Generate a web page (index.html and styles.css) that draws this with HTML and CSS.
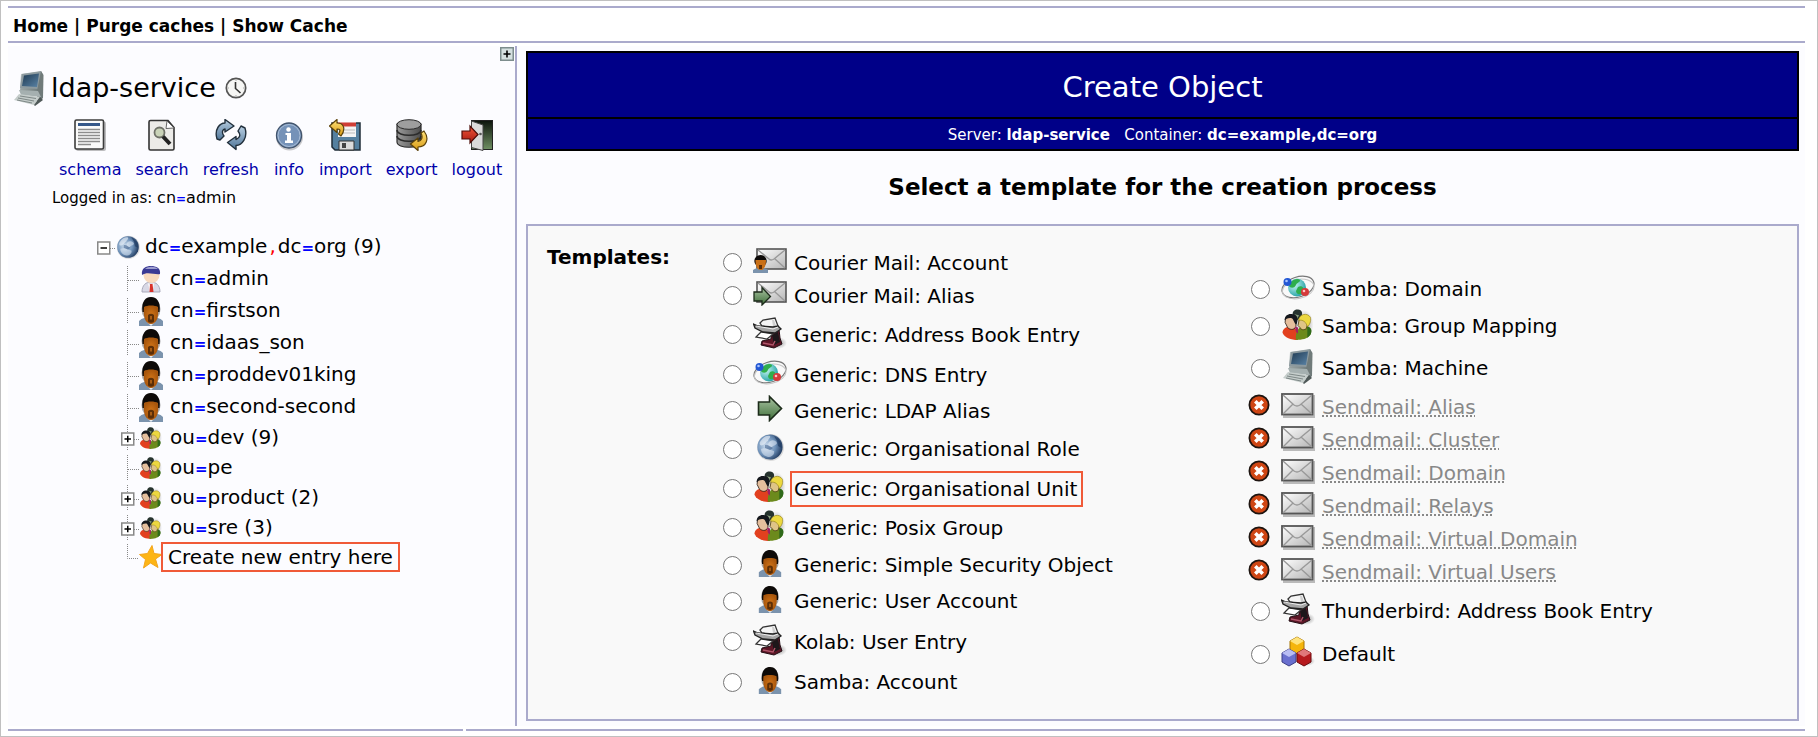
FILE: index.html
```html
<!DOCTYPE html>
<html lang="en">
<head>
    <meta charset="utf-8">
    <title>ldap-service - Create Object</title>
    <link rel="stylesheet" href="styles.css">
</head>
<body>
    <!-- icon sprite -->
    <svg class="sprite" aria-hidden="true">
        <defs>
            <linearGradient id="gScreen" x1="0" y1="0" x2="1" y2="1"><stop offset="0" stop-color="#1f3a52"/><stop offset="1" stop-color="#5a83a6"/></linearGradient>
            <linearGradient id="gCase" x1="0" y1="0" x2="1" y2="1"><stop offset="0" stop-color="#c3cbcb"/><stop offset="1" stop-color="#5f6b6b"/></linearGradient>
            <linearGradient id="gMail" x1="0" y1="0" x2="1" y2="1"><stop offset="0" stop-color="#ffffff"/><stop offset="1" stop-color="#b5b5b5"/></linearGradient>
            <linearGradient id="gGreen" x1="0" y1="0" x2="0" y2="1"><stop offset="0" stop-color="#a9c3a2"/><stop offset="1" stop-color="#3f6f3a"/></linearGradient>
            <linearGradient id="gGold" x1="0" y1="0" x2="0" y2="1"><stop offset="0" stop-color="#ffe27a"/><stop offset="1" stop-color="#d99a12"/></linearGradient>
            <linearGradient id="gBlue" x1="0" y1="0" x2="0" y2="1"><stop offset="0" stop-color="#b9cfe2"/><stop offset="1" stop-color="#4f7598"/></linearGradient>
            <linearGradient id="gDisk" x1="0" y1="0" x2="1" y2="0"><stop offset="0" stop-color="#9a9a9a"/><stop offset="1" stop-color="#4c4c4c"/></linearGradient>
            <linearGradient id="gDoor" x1="0" y1="0" x2="0" y2="1"><stop offset="0" stop-color="#0c140c"/><stop offset="1" stop-color="#6f8f62"/></linearGradient>
            <linearGradient id="gRed" x1="0" y1="0" x2="0" y2="1"><stop offset="0" stop-color="#f0553a"/><stop offset="1" stop-color="#a81a10"/></linearGradient>
            <radialGradient id="gGlobe" cx="35%" cy="45%" r="68%"><stop offset="0" stop-color="#cfdff0"/><stop offset="0.55" stop-color="#6d90b8"/><stop offset="1" stop-color="#1a3358"/></radialGradient>
            <radialGradient id="gWorld" cx="35%" cy="35%" r="70%"><stop offset="0" stop-color="#c8f6f2"/><stop offset="1" stop-color="#22a1a5"/></radialGradient>
            <radialGradient id="gFace"><stop offset="0" stop-color="#d07418"/><stop offset="1" stop-color="#a8560c"/></radialGradient>
            <radialGradient id="gShade"><stop offset="0" stop-color="#000" stop-opacity="0.4"/><stop offset="1" stop-color="#000" stop-opacity="0"/></radialGradient>
        </defs>
        <symbol id="machine" viewBox="0 0 32 36">
            <path d="M8 4 28 1 30 5 28 24 7 21Z" fill="url(#gCase)"/>
            <path d="M9 4 28 1.500 26 19 7 18Z" fill="#8d9a9f"/>
            <path d="M11 5.500 26 3.500 24 17 9 16Z" fill="url(#gScreen)"/>
            <path d="M28 1 30.500 5 30 28 24 34 24 21Z" fill="#707b7a"/>
            <path d="M6 20 25 21 28 27 8 25Z" fill="#a5b0b0"/>
            <path d="M6 24 27 27 21 35 1 30Z" fill="#c5cdcb"/>
            <path d="M7 26 23 28.500M5 28 21 31M4 30 19 33" stroke="#7f8988" fill="none"/>
            <path d="M27 27 21 35 22 36 30 30Z" fill="#4f5958"/>
        </symbol>
        <symbol id="clock" viewBox="0 0 22 22">
            <circle cx="11" cy="11" r="9.700" fill="#f6f6f4" stroke="#555" stroke-width="1.700"/>
            <path d="M10.500 5V11.500L15.500 16" fill="none" stroke="#333" stroke-width="1.600"/>
            <path d="M11 2.500V4M11 18V19.500M2.500 11H4M18 11H19.500" stroke="#aaa"/>
        </symbol>
        <symbol id="schema" viewBox="0 0 32 32">
            <rect x="2" y="2.500" width="30" height="29.500" rx="2" fill="#000" opacity="0.25"/>
            <rect x="1" y="1" width="28.500" height="29" rx="1.500" fill="#fafafa" stroke="#3c3c3c" stroke-width="1.600"/>
            <rect x="4" y="4" width="22" height="3" fill="#35588a"/>
            <path d="M4 10.500H26M4 13.500H26M4 16.500H26M4 19.500H26M4 22.500H26M4 25.500H17" stroke="#8c8c8c" stroke-width="1.300"/>
        </symbol>
        <symbol id="search" viewBox="0 0 32 32">
            <path d="M4.500 1.500H22L28 8.500V29.500Q28 31 26.500 31H4.500Q3 31 3 29.500V3Q3 1.500 4.500 1.500Z" fill="#ecebe8" stroke="#333" stroke-width="1.600"/>
            <path d="M21 2 20 9.500 28 9Z" fill="#fff" stroke="#666"/>
            <circle cx="13.500" cy="13.500" r="5" fill="#c9d3b8" stroke="#6f7168" stroke-width="1.800"/>
            <path d="M17 17.500 24 25" stroke="#222" stroke-width="4"/>
        </symbol>
        <symbol id="refresh" viewBox="0 0 32 32">
            <path d="M2 20C-1 10 5 4 10 4V0.500L19 7 10 13V10C8 10 6 13 9 17L5 21Z" fill="url(#gBlue)" stroke="#22303c" stroke-width="1.400" stroke-linejoin="round"/>
            <path d="M30 9C33 19 27 26 21 26.500V30.500L12.500 23.500 21 17.500V20.500C25 19 26 16 23 12L26 7Z" fill="url(#gBlue)" stroke="#22303c" stroke-width="1.400" stroke-linejoin="round"/>
        </symbol>
        <symbol id="info" viewBox="0 0 32 32">
            <circle cx="16.500" cy="18" r="13.500" fill="#000" opacity="0.2"/>
            <circle cx="16" cy="16.500" r="12.500" fill="#7592b8" stroke="#41536b" stroke-width="1.300"/>
            <circle cx="16" cy="16.500" r="11" fill="none" stroke="#a9bdd6"/>
            <circle cx="15.500" cy="10.500" r="2.200" fill="#fff"/>
            <path d="M12.500 14H18V21.500H20V24H12V21.500H14V16H12.500Z" fill="#fff"/>
        </symbol>
        <symbol id="import" viewBox="0 0 32 32">
            <path d="M3 4H31V31H6L3 28Z" fill="#55809f" stroke="#1f2c38" stroke-width="1.500"/>
            <rect x="9" y="3" width="18" height="15" fill="#f4f4f4"/>
            <rect x="9" y="3.500" width="18" height="4" fill="#cf3d36"/>
            <path d="M10 11H26M10 14H26" stroke="#bbb"/>
            <path d="M10 22H25V31H10Z" fill="#dcdcdc" stroke="#333"/>
            <rect x="13" y="24" width="4" height="5" fill="#444"/>
            <path d="M0.500 7 8 0.500V4C15 4 17 10 12 17L9.500 15C12 11 11 10 8 10V13.500Z" fill="url(#gGold)" stroke="#5b420a" stroke-width="1.200" stroke-linejoin="round"/>
        </symbol>
        <symbol id="export" viewBox="0 0 32 32">
            <path d="M1 5V23C1 30 25 30 25 23V5Z" fill="url(#gDisk)" stroke="#2b2b2b" stroke-width="1.200"/>
            <path d="M1 11C1 18 25 18 25 11M1 17C1 24 25 24 25 17" fill="none" stroke="#2b2b2b" stroke-width="1.500"/>
            <ellipse cx="13" cy="5.500" rx="12" ry="4.800" fill="#9e9e9e" stroke="#2b2b2b"/>
            <path d="M28 12C34 20 30 28 22 28V31.500L14.500 25 22 19V22.500C26 22 27 18 25 14Z" fill="url(#gGold)" stroke="#5b420a" stroke-width="1.200" stroke-linejoin="round"/>
        </symbol>
        <symbol id="logout" viewBox="0 0 32 32">
            <rect x="10.500" y="1.500" width="21" height="29" fill="url(#gDoor)" stroke="#222"/>
            <path d="M10.500 2 22 6V31.500L10.500 28.500Z" fill="#dadada" stroke="#444"/>
            <circle cx="19.500" cy="15" r="1.300" fill="#555"/>
            <path d="M1 12H9V7L17 15.500 9 24V20H1Z" fill="url(#gRed)" stroke="#4c0c08" stroke-width="1.200"/>
        </symbol>
        <symbol id="globe" viewBox="0 0 28 28">
            <circle cx="14.500" cy="14.500" r="13.500" fill="#000" opacity="0.12"/>
            <circle cx="14" cy="14" r="12.600" fill="url(#gGlobe)"/>
            <path d="M4 9C7 4 11 2 14 3 15 5 12 6 12 8 10 8 10 11 7 12 5 13 3 12 4 9Z" fill="#f0f5fb" opacity="0.6"/>
            <path d="M13 9C16 6 20 7 21 10 20 13 17 12 16 14 13 15 11 12 13 9ZM5 16C9 14 14 17 18 18 19 21 16 24 12 24 8 23 5 20 5 16Z" fill="#eef4fb" opacity="0.5"/>
            <path d="M18 3C23 5 26 10 25.500 15L22 13 21 8Z" fill="#17345c" opacity="0.6"/>
            <path d="M9 12C12 11 14 14 17 15L14 17 9 15Z" fill="#2b4d7d" opacity="0.5"/>
        </symbol>
        <symbol id="admin" viewBox="0 0 24 28">
            <path d="M3 27C3 20 7 17 12 17S21 20 21 27Z" fill="#d9d9e6" stroke="#a9a9bb"/>
            <path d="M9 18 12 21 15 18 13.500 27H11Z" fill="#fff"/>
            <path d="M11 19H13.500L14.500 27H10.500Z" fill="#d8322a"/>
            <circle cx="12.500" cy="10" r="8" fill="#f8d9bd"/>
            <path d="M3 10C2 3 7 1 12 1S22 3 21 9C16 10 8 6 3 10Z" fill="#3a3a94"/>
            <path d="M6 4C9 1 16 1 19 4Z" fill="#9d9dcf"/>
        </symbol>
        <symbol id="user" viewBox="0 0 24 29">
            <path d="M0 24C3 21 7 20 12 20S21 21 24 24V29H0Z" fill="#7b93ad"/>
            <path d="M8 25H16L12 29Z" fill="#e9eef3"/>
            <ellipse cx="12" cy="12" rx="9.500" ry="12" fill="#333" opacity="0.4"/>
            <path d="M3.500 15C2 4 7 0 12 0S22 4 20.500 15Z" fill="#0d0a08"/>
            <path d="M5 10C8 8 16 8 19 10 20 19 18 27 12 27S4 19 5 10Z" fill="url(#gFace)"/>
            <path d="M9 24.500V18Q12 15.500 15 18V24.500Q12 27 9 24.500Z" fill="#4a2506" opacity="0.85"/>
            <rect x="11" y="19" width="2" height="3.500" fill="#a85c14"/>
        </symbol>
        <symbol id="group" viewBox="0 0 30 30">
            <ellipse cx="21" cy="15" rx="9" ry="14" fill="url(#gShade)"/>
            <path d="M10 7C9 2 12 0 15 0.500 19 1 20 4 18 8L14 11Z" fill="#26332e"/>
            <path d="M11.500 5 16 6 14 10Z" fill="#8aa07f"/>
            <path d="M0 23C0 19 4 17 8 17S15 20 15 30C8 30 2 28 0 23Z" fill="#e2401f"/>
            <path d="M13 30C12 22 16 16 22 16 27 17 29 20 27 25 24 29 19 30 13 30Z" fill="#6c8a1c"/>
            <path d="M24 17C28 18 29 21 27 25L24 28Z" fill="#2f6a1a"/>
            <path d="M3 9C4 5 12 5 13 9L13 17C11 21 7 20 5 18L2.500 13Z" fill="#e5bf9d" stroke="#2a1c12" stroke-width="0.800"/>
            <path d="M2 11C2 6 6 4 10 5 14 5 16 9 13.500 15 11 14 11 10 9 9 6 8 3 10 2 11Z" fill="#15181d"/>
            <path d="M16 11C17 7 24 8 25 12L23 19C20 21 18 20 17 18L15 16Z" fill="#dfc487" stroke="#4b3a12" stroke-width="0.800"/>
            <path d="M15.500 11C16 5 24 3 27 8 28 12 26 16 24 17 23 13 20 10 15.500 11Z" fill="#ecd840" stroke="#8c7a1a" stroke-width="0.600"/>
            <path d="M12 17 15 18 15 24 13 22Z" fill="#a12063"/>
        </symbol>
        <symbol id="star" viewBox="0 0 24 24">
            <path d="M13 0.500 15 8.500 23 9.500 16.500 14 19 22.500 11.500 18 4.500 23 6.500 14.500 0.500 9.500 8.500 8.500Z" fill="#fdb515" stroke="#f3a51d"/>
        </symbol>
        <symbol id="mail" viewBox="0 0 34 25">
            <rect x="2" y="2" width="32" height="23" fill="#000" opacity="0.25"/>
            <rect x="1" y="1" width="30.500" height="20.500" fill="url(#gMail)" stroke="#555" stroke-width="1.800"/>
            <path d="M2 2 13 12Q16 14 19 12L31 2M2 21 12 11M31 21 20 11" fill="none" stroke="#999" stroke-width="1.400"/>
        </symbol>
        <symbol id="mail-user" viewBox="0 0 34 25">
            <rect x="4" y="1" width="29" height="20" fill="url(#gMail)" stroke="#555" stroke-width="1.600"/>
            <path d="M5 2 16 11Q18 13 21 11L32 2M32 20 22 11" fill="none" stroke="#999" stroke-width="1.400"/>
            <path d="M0 25V22C4 19 11 19 15 22V25Z" fill="#7b93ad"/>
            <ellipse cx="7.500" cy="13" rx="6.200" ry="6" fill="#0d0a08"/>
            <path d="M2.500 12H13C13 18 11 22 7.500 22S2.500 18 2.500 12Z" fill="#c97018"/>
            <rect x="6" y="17" width="3" height="4" fill="#5a2e08"/>
        </symbol>
        <symbol id="mail-alias" viewBox="0 0 34 25">
            <rect x="4" y="1" width="29" height="20" fill="url(#gMail)" stroke="#555" stroke-width="1.600"/>
            <path d="M5 2 16 11Q18 13 21 11L32 2M32 20 22 11" fill="none" stroke="#999" stroke-width="1.400"/>
            <path d="M1 11H9V6.500L17.500 15.500 9 24V20H1Z" fill="url(#gGreen)" stroke="#1c2b1a" stroke-width="1.300"/>
        </symbol>
        <symbol id="book" viewBox="0 0 34 32">
            <ellipse cx="25" cy="26" rx="9" ry="6" fill="url(#gShade)"/>
            <path d="M18 15 26 12 27 21 29 27 21 31 8 28 9 24 18 22Z" fill="#5c1626" stroke="#241016"/>
            <path d="M19 18 25 15 27 25 21 28Z" fill="#1d171a"/>
            <path d="M10 26 20 28 22 24" fill="none" stroke="#b0566a" stroke-width="1.400"/>
            <path d="M7 6 10 3 22 1 25 9 22 12 9 9Z" fill="#f5f5f5" stroke="#333" stroke-width="1.300"/>
            <path d="M19 3 21 3 23 9 20 9Z" fill="#cfcfcf"/>
            <path d="M3 20 8 15 20 17 14 22Z" fill="#fff" stroke="#333" stroke-width="1.200"/>
            <path d="M0.500 7 5 9 20 10 25 9 28 12 22 16 10 15 2 11Z" fill="#a5a5a5" stroke="#222" stroke-width="1.300"/>
            <path d="M3 9 20 12 25 10" fill="none" stroke="#eee"/>
        </symbol>
        <symbol id="dns" viewBox="0 0 34 27">
            <ellipse cx="17" cy="13" rx="16.500" ry="10" fill="none" stroke="#777" stroke-width="1.200" transform="rotate(-18 17 13)"/>
            <ellipse cx="17" cy="15" rx="16" ry="9.500" fill="none" stroke="#c5c5c5" transform="rotate(-12 17 14)"/>
            <circle cx="16" cy="13.500" r="9" fill="url(#gWorld)"/>
            <path d="M9 9C12 5 17 4 19 6 19 9 16 8 15 11 13 15 9 14 8 12ZM17 13C21 11 24 14 22 18 19 22 15 20 15 17Z" fill="#2fae4c"/>
            <circle cx="6.500" cy="8" r="4" fill="#2257d4"/>
            <circle cx="5.500" cy="7" r="1.300" fill="#a9c4ff"/>
            <circle cx="24" cy="18" r="4" fill="#d53a3a"/>
            <circle cx="23" cy="17" r="1.300" fill="#ffc2c2"/>
        </symbol>
        <symbol id="alias" viewBox="0 0 25 27">
            <path d="M1 7H12V1.500L24 13.500 12 25.500V20H1Z" fill="url(#gGreen)" stroke="#1c2b1a" stroke-width="1.600"/>
        </symbol>
        <symbol id="cubes" viewBox="0 0 34 32">
            <ellipse cx="26" cy="25" rx="8" ry="5" fill="url(#gShade)"/>
            <path d="M16 1 23 5V14L16 18 9 14V5Z" fill="#f5b50c" stroke="#a87400"/>
            <path d="M16 1 23 5 16 9 9 5Z" fill="#ffe37c"/>
            <path d="M8 13 15 17V26L8 30 1 26V17Z" fill="#6a70cf" stroke="#3c3f86"/>
            <path d="M8 13 15 17 8 21 1 17Z" fill="#b9bdf3"/>
            <path d="M23 13 30 17V26L23 30 16 26V17Z" fill="#b61a1e" stroke="#6c0b0f"/>
            <path d="M23 13 30 17 23 21 16 17Z" fill="#e0777a"/>
        </symbol>
        <symbol id="invalid" viewBox="0 0 22 22">
            <circle cx="11" cy="11" r="9.600" fill="#cf4614" stroke="#1d1410" stroke-width="1.800"/>
            <path d="M7.300 7.300 14.700 14.700M14.700 7.300 7.300 14.700" stroke="#fff" stroke-width="3.600"/>
        </symbol>
        <symbol id="branch" viewBox="0 0 18 26">
            <path d="M6.500 0V26M7 14.500H18" stroke="#888" stroke-dasharray="1 1" fill="none"/>
        </symbol>
        <symbol id="branch-end" viewBox="0 0 18 26">
            <path d="M6.500 0V14.500H18" stroke="#888" stroke-dasharray="1 1" fill="none"/>
        </symbol>
        <symbol id="branch-plus" viewBox="0 0 18 26">
            <path d="M6.500 0V26M7 14.500H18" stroke="#888" stroke-dasharray="1 1" fill="none"/>
            <rect x="0.750" y="8" width="12" height="12" fill="#fff" stroke="#888" stroke-width="1.500"/>
            <path d="M3.500 14H10M6.750 10.750V17.250" stroke="#000" stroke-width="1.500"/>
        </symbol>
        <symbol id="branch-minus" viewBox="0 0 18 26">
            <path d="M13 14.500H18" stroke="#888" stroke-dasharray="1 1"/>
            <rect x="0.750" y="8" width="12" height="12" fill="#fff" stroke="#888" stroke-width="1.500"/>
            <path d="M3.500 14H10" stroke="#000" stroke-width="1.500"/>
        </symbol>
        <symbol id="expand" viewBox="0 0 14 14">
            <rect x="0.750" y="0.750" width="12.500" height="12.500" fill="#d5e0e0" stroke="#7d8d8d" stroke-width="1.500"/>
            <path d="M3.500 7H10.500M7 3.500V10.500" stroke="#000" stroke-width="1.600"/>
        </symbol>
    </svg>

    <nav class="topbar">
        <a href="#">Home</a> | <a href="#">Purge caches</a> | <a href="#">Show Cache</a>
    </nav>

    <div class="page">
        <aside class="sidebar">
            <button class="expand" aria-label="Expand"><svg width="14" height="14"><use href="#expand"/></svg></button>
            <div class="server">
                <svg width="32" height="36"><use href="#machine"/></svg>
                <span class="server-name">ldap-service</span>
                <svg width="22" height="22"><use href="#clock"/></svg>
            </div>
            <div class="tools">
                <a href="#"><svg width="32" height="32"><use href="#schema"/></svg>schema</a>
                <a href="#"><svg width="32" height="32"><use href="#search"/></svg>search</a>
                <a href="#"><svg width="32" height="32"><use href="#refresh"/></svg>refresh</a>
                <a href="#"><svg width="32" height="32"><use href="#info"/></svg>info</a>
                <a href="#"><svg width="32" height="32"><use href="#import"/></svg>import</a>
                <a href="#"><svg width="32" height="32"><use href="#export"/></svg>export</a>
                <a href="#"><svg width="32" height="32"><use href="#logout"/></svg>logout</a>
            </div>
            <div class="logged">Logged in as: <a href="#">cn<b>=</b>admin</a></div>

            <ul class="tree">
                <li class="root"><svg width="18" height="26"><use href="#branch-minus"/></svg><svg width="26" height="24"><use href="#globe"/></svg><a href="#">dc<b>=</b>example<i>,</i>dc<b>=</b>org (9)</a></li>
                <li><svg width="18" height="26"><use href="#branch"/></svg><svg width="24" height="28"><use href="#admin"/></svg><a href="#">cn<b>=</b>admin</a></li>
                <li><svg width="18" height="26"><use href="#branch"/></svg><svg width="24" height="29"><use href="#user"/></svg><a href="#">cn<b>=</b>firstson</a></li>
                <li><svg width="18" height="26"><use href="#branch"/></svg><svg width="24" height="29"><use href="#user"/></svg><a href="#">cn<b>=</b>idaas_son</a></li>
                <li><svg width="18" height="26"><use href="#branch"/></svg><svg width="24" height="29"><use href="#user"/></svg><a href="#">cn<b>=</b>proddev01king</a></li>
                <li><svg width="18" height="26"><use href="#branch"/></svg><svg width="24" height="29"><use href="#user"/></svg><a href="#">cn<b>=</b>second-second</a></li>
                <li class="ou"><svg width="18" height="26"><use href="#branch-plus"/></svg><svg width="24" height="22"><use href="#group"/></svg><a href="#">ou<b>=</b>dev (9)</a></li>
                <li class="ou"><svg width="18" height="26"><use href="#branch"/></svg><svg width="24" height="22"><use href="#group"/></svg><a href="#">ou<b>=</b>pe</a></li>
                <li class="ou"><svg width="18" height="26"><use href="#branch-plus"/></svg><svg width="24" height="22"><use href="#group"/></svg><a href="#">ou<b>=</b>product (2)</a></li>
                <li class="ou"><svg width="18" height="26"><use href="#branch-plus"/></svg><svg width="24" height="22"><use href="#group"/></svg><a href="#">ou<b>=</b>sre (3)</a></li>
                <li class="new"><svg width="18" height="26"><use href="#branch-end"/></svg><svg width="24" height="24"><use href="#star"/></svg><a class="marked" href="#">Create new entry here</a></li>
            </ul>
        </aside>

        <main class="main">
            <header class="banner">
                <h1>Create Object</h1>
                <p>Server: <b>ldap-service</b> &nbsp; Container: <b>dc=example,dc=org</b></p>
            </header>
            <h2>Select a template for the creation process</h2>

            <form class="templates">
                <h3>Templates:</h3>
                <div class="col">
                    <label class="row h-mail"><input type="radio" name="template"><svg width="34" height="25"><use href="#mail-user"/></svg><span>Courier Mail: Account</span></label>
                    <label class="row h-mail"><input type="radio" name="template"><svg width="34" height="25"><use href="#mail-alias"/></svg><span>Courier Mail: Alias</span></label>
                    <label class="row h-book"><input type="radio" name="template"><svg width="34" height="32"><use href="#book"/></svg><span>Generic: Address Book Entry</span></label>
                    <label class="row h-dns"><input type="radio" name="template"><svg width="34" height="27"><use href="#dns"/></svg><span>Generic: DNS Entry</span></label>
                    <label class="row h-alias"><input type="radio" name="template"><svg width="34" height="27"><use href="#alias"/></svg><span>Generic: LDAP Alias</span></label>
                    <label class="row h-globe"><input type="radio" name="template"><svg width="34" height="28"><use href="#globe"/></svg><span>Generic: Organisational Role</span></label>
                    <label class="row h-group"><input type="radio" name="template"><svg width="34" height="31"><use href="#group"/></svg><span class="marked">Generic: Organisational Unit</span></label>
                    <label class="row h-group"><input type="radio" name="template"><svg width="34" height="31"><use href="#group"/></svg><span>Generic: Posix Group</span></label>
                    <label class="row h-user"><input type="radio" name="template"><svg width="34" height="27"><use href="#user"/></svg><span>Generic: Simple Security Object</span></label>
                    <label class="row h-user"><input type="radio" name="template"><svg width="34" height="27"><use href="#user"/></svg><span>Generic: User Account</span></label>
                    <label class="row h-book"><input type="radio" name="template"><svg width="34" height="32"><use href="#book"/></svg><span>Kolab: User Entry</span></label>
                    <label class="row h-user"><input type="radio" name="template"><svg width="34" height="27"><use href="#user"/></svg><span>Samba: Account</span></label>
                </div>
                <div class="col">
                    <label class="row h-dns"><input type="radio" name="template"><svg width="34" height="27"><use href="#dns"/></svg><span>Samba: Domain</span></label>
                    <label class="row h-group"><input type="radio" name="template"><svg width="34" height="31"><use href="#group"/></svg><span>Samba: Group Mapping</span></label>
                    <label class="row h-book"><input type="radio" name="template"><svg width="34" height="36"><use href="#machine"/></svg><span>Samba: Machine</span></label>
                    <div class="row h-mail off"><svg width="22" height="22"><use href="#invalid"/></svg><svg width="34" height="25"><use href="#mail"/></svg><abbr title="Template not available">Sendmail: Alias</abbr></div>
                    <div class="row h-mail off"><svg width="22" height="22"><use href="#invalid"/></svg><svg width="34" height="25"><use href="#mail"/></svg><abbr title="Template not available">Sendmail: Cluster</abbr></div>
                    <div class="row h-mail off"><svg width="22" height="22"><use href="#invalid"/></svg><svg width="34" height="25"><use href="#mail"/></svg><abbr title="Template not available">Sendmail: Domain</abbr></div>
                    <div class="row h-mail off"><svg width="22" height="22"><use href="#invalid"/></svg><svg width="34" height="25"><use href="#mail"/></svg><abbr title="Template not available">Sendmail: Relays</abbr></div>
                    <div class="row h-mail off"><svg width="22" height="22"><use href="#invalid"/></svg><svg width="34" height="25"><use href="#mail"/></svg><abbr title="Template not available">Sendmail: Virtual Domain</abbr></div>
                    <div class="row h-mail off"><svg width="22" height="22"><use href="#invalid"/></svg><svg width="34" height="25"><use href="#mail"/></svg><abbr title="Template not available">Sendmail: Virtual Users</abbr></div>
                    <label class="row h-book"><input type="radio" name="template"><svg width="34" height="32"><use href="#book"/></svg><span>Thunderbird: Address Book Entry</span></label>
                    <label class="row h-cubes"><input type="radio" name="template"><svg width="34" height="32"><use href="#cubes"/></svg><span>Default</span></label>
                </div>
            </form>
        </main>
    </div>

    <footer class="bottom"><span></span><span></span></footer>
</body>
</html>
```
FILE: styles.css
```css
* {
    box-sizing: border-box;
}
body {
    margin: 0;
    padding: 5px 12px 5px 7px;
    min-height: 100vh;
    border: 1px solid #c0c0c0;
    background: #fff;
    color: #000;
    font-family: Verdana, "DejaVu Sans", sans-serif;
    font-size: 20px;
    line-height: 24px;
    display: flex;
    flex-direction: column;
}
a {
    color: inherit;
    text-decoration: none;
}
svg {
    flex: none;
    display: block;
}
.sprite {
    position: absolute;
    width: 0;
    height: 0;
}

.topbar {
    border-top: 2px solid #aaaacc;
    border-bottom: 2px solid #aaaacc;
    padding: 6px 5px 3px;
    margin-bottom: 3px;
    font-size: 17px;
    font-weight: bold;
}
.page {
    display: flex;
    flex: 1;
    background: #fcfcff;
}

/* left side */
.sidebar {
    flex: none;
    width: 509px;
    border-right: 2px solid #aaaacc;
    position: relative;
}
.expand {
    position: absolute;
    top: 1px;
    right: 1px;
    padding: 0;
    border: 0;
    background: none;
    cursor: pointer;
}
.server {
    display: flex;
    align-items: center;
    gap: 6px;
    padding: 24px 0 0 5px;
}
.server-name {
    font-size: 27px;
    line-height: 30px;
    margin-right: 3px;
}
.tools {
    display: flex;
    gap: 14px;
    padding: 13px 0 0 51px;
    font-size: 16px;
    color: #0000aa;
}
.tools a {
    display: flex;
    flex-direction: column;
    align-items: center;
    gap: 7px;
}
.logged {
    padding: 4px 0 0 44px;
    font-size: 15px;
}
.logged a {
    font-size: 16px;
}
.logged b,
.tree b {
    color: #0000ff;
    font-size: 15px;
    font-weight: bold;
}
.logged b {
    font-size: 12px;
}
.tree {
    list-style: none;
    margin: 0;
    padding: 20px 0 0 113px;
}
.tree li {
    display: flex;
    align-items: center;
    height: 32px;
}
.tree li a {
    margin-left: 7px;
}
.tree .root {
    margin-left: -24px;
}
.tree .root a {
    margin-left: 4px;
}
.tree .ou {
    height: 30px;
}
.tree .new {
    height: 28px;
}
.tree i {
    color: #ff0000;
    font-style: normal;
    margin: 0 2px;
}
.marked {
    border: 2px solid #f05a38;
}
.tree .new .marked {
    margin-left: -2px;
    padding: 1px 5px;
}

/* right side */
.main {
    flex: 1;
    display: flex;
    flex-direction: column;
    padding: 5px 6px 5px 9px;
}
.banner {
    border: 2px solid #000;
    background: #000088;
    color: #fff;
    text-align: center;
}
.banner h1 {
    margin: 0;
    padding: 18px 0 14px;
    border-bottom: 2px solid #000;
    font-size: 29px;
    font-weight: normal;
    line-height: 32px;
}
.banner p {
    margin: 0;
    padding: 4px 0 2px;
    font-size: 15px;
}
h2 {
    margin: 21px 0 22px;
    font-size: 23px;
    line-height: 30px;
    text-align: center;
}
.templates {
    flex: 1;
    display: grid;
    grid-template-columns: 176px 1fr 1fr;
    align-items: center;
    border: 2px solid #aaaacc;
    background: #f9f9f9;
    padding: 19px 18px 18px 19px;
}
.templates h3 {
    align-self: start;
    margin: 0;
    font-size: 20px;
}
.row {
    display: flex;
    align-items: center;
}
.row input {
    width: 19px;
    height: 19px;
    margin: 0 11px 0 0;
}
.row svg {
    margin: 0 7px 4px 0;
}
.row .marked {
    margin-left: -4px;
    padding: 4px 4px 4px 2px;
}
.h-mail { height: 33px; }
.h-book { height: 45px; }
.h-dns { height: 35px; }
.h-alias { height: 37px; }
.h-globe { height: 40px; }
.h-group { height: 39px; }
.h-user { height: 36px; }
.h-cubes { height: 41px; }
.off {
    color: #888;
    margin-left: -3px;
}
.off svg:first-child {
    margin-right: 11px;
}

.bottom {
    display: grid;
    grid-template-columns: 455px 1fr;
    gap: 3px;
    margin-top: 3px;
}
.bottom span {
    height: 2px;
    background: #aaaacc;
}
```
